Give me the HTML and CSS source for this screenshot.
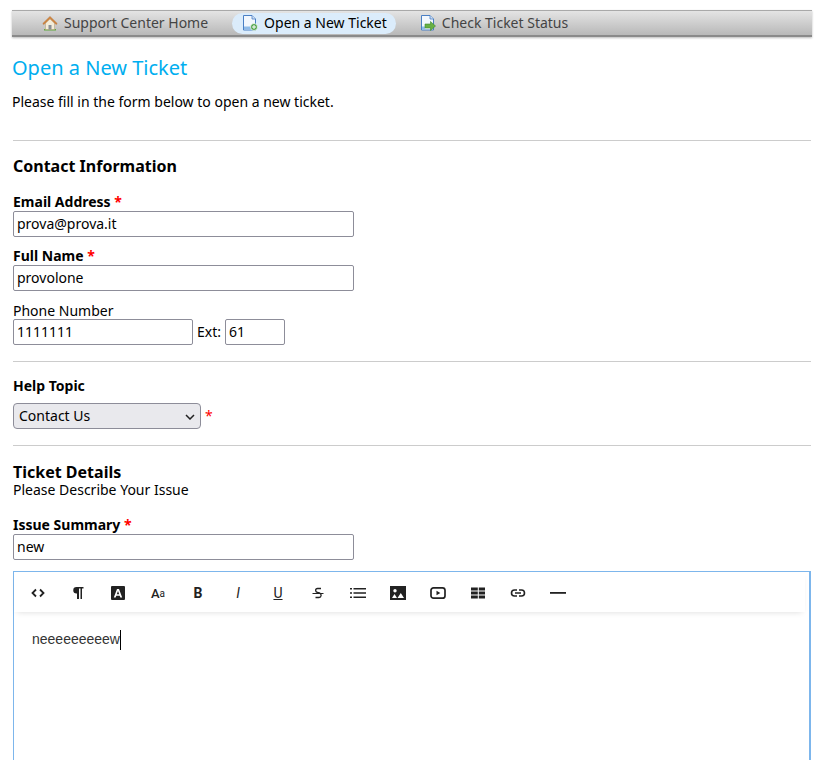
FILE: index.html
```html
<!doctype html>
<html>
<head>
<meta charset="UTF-8">
<title>Open a New Ticket</title>
<link rel="stylesheet" href="styles.css">
</head>
<body>
<div id="nav">
	<a class="nav_item" href="#">
		<svg class="nav_icon" viewBox="0 0 16 16">
			<path d="M2 14h12v1.500H2z" fill="#5fa83c"/>
			<path d="M3.500 8v6.500h9V8L8 3.500z" fill="#f3ecd9" stroke="#b9a582" stroke-width=".6"/>
			<path d="M6.500 10h3v4.500h-3z" fill="#8a8f95"/>
			<path d="M.8 8.600 8 1.500l7.200 7.100-1 .9L8 3.600 1.800 9.500z" fill="#d98a3d" stroke="#a8622a" stroke-width=".5"/>
		</svg>
		Support Center Home
	</a>
	<a class="nav_item active" href="#">
		<svg class="nav_icon" viewBox="0 0 16 16">
			<path d="M1.500.5h8.500l3.500 3.500v11h-12z" fill="#f2f7fd" stroke="#4a7fc4"/>
			<path d="M10 .5V4h3.500" fill="#cfe0f5" stroke="#4a7fc4" stroke-width=".8"/>
			<path d="M2 11.500h7v3H2z" fill="#8fbbe8"/>
			<circle cx="12" cy="12" r="3.500" fill="#4fa34a" stroke="#fff" stroke-width=".7"/>
			<path d="M10 11.500h1.500V10h1v1.500H14v1h-1.500V14h-1v-1.500H10z" fill="#fff"/>
		</svg>
		Open a New Ticket
	</a>
	<a class="nav_item" href="#">
		<svg class="nav_icon" viewBox="0 0 16 16">
			<path d="M1.500.5h8.500l3.500 3.500v11h-12z" fill="#f2f7fd" stroke="#4a7fc4"/>
			<path d="M10 .5V4h3.500" fill="#cfe0f5" stroke="#4a7fc4" stroke-width=".8"/>
			<path d="M2 11.500h3v3H2z" fill="#8fbbe8"/>
			<path d="M5 9h5.500V6.500L15.500 11l-5 4.500V13H5z" fill="#68b044" stroke="#3f8a2c" stroke-width=".6"/>
		</svg>
		Check Ticket Status
	</a>
</div>
<div id="content">
	<h1>Open a New Ticket</h1>
	<p class="intro">Please fill in the form below to open a new ticket.</p>
	<form id="ticketForm">
		<hr>
		<h3 class="contact_title">Contact Information</h3>
		<div class="field">
			<label class="strong">Email Address <span class="req">*</span></label>
			<input class="txt" value="prova@prova.it">
		</div>
		<div class="field">
			<label class="strong">Full Name <span class="req">*</span></label>
			<input class="txt" value="provolone">
		</div>
		<div class="field phone_field">
			<label>Phone Number</label>
			<div class="phone_row">
				<input class="txt phone" value="1111111">
				<span>Ext:</span>
				<input class="txt ext" value="61">
			</div>
		</div>
		<hr class="after_phone">
		<label class="strong topic_label">Help Topic</label>
		<div class="topic_row">
			<div class="select_wrap">
				<select class="topic"><option>Contact Us</option></select>
				<svg class="select_arrow" viewBox="0 0 10 6"><path d="M1 1l4 4 4-4" fill="none" stroke="#222" stroke-width="1.500"/></svg>
			</div>
			<span class="req thin">*</span>
		</div>
		<hr class="after_topic">
		<h3 class="details_title">Ticket Details</h3>
		<div class="details_sub">Please Describe Your Issue</div>
		<div class="field summary">
			<label class="strong">Issue Summary <span class="req">*</span></label>
			<input class="txt" value="new">
		</div>
		<div class="editor">
			<div class="toolbar">
				<button type="button" class="tool"><svg viewBox="0 0 16 16"><path d="M6 4.500 2.500 8 6 11.500M10 4.500 13.500 8 10 11.500" fill="none" stroke="#222" stroke-width="1.800"/></svg></button>
				<button type="button" class="tool"><svg viewBox="0 0 16 16"><path d="M6.500 2h7v1.500h-1.500V14h-1.500V3.500H9V14H7V8.500h-.5a3.250 3.250 0 0 1 0-6.500z" fill="#222"/></svg></button>
				<button type="button" class="tool"><svg viewBox="0 0 16 16"><path fill-rule="evenodd" d="M2 1h12a1 1 0 0 1 1 1v12a1 1 0 0 1-1 1H2a1 1 0 0 1-1-1V2a1 1 0 0 1 1-1zm5 3-3.200 8.500h1.900l.6-1.800h3.400l.6 1.800h1.900L9 4zm1 2 1.200 3.200H6.800z" fill="#222"/></svg></button>
				<button type="button" class="tool tool_txt"><span class="big_a">A</span><span class="small_a">a</span></button>
				<button type="button" class="tool tool_txt b">B</button>
				<button type="button" class="tool tool_txt i">I</button>
				<button type="button" class="tool tool_txt u">U</button>
				<button type="button" class="tool"><svg viewBox="0 0 16 16"><path d="M11 3.500H7.500C5 3.500 5 7 7.500 7.500l2 .5c2.500.7 2 4.500-.5 4.500H5.500" fill="none" stroke="#222" stroke-width="1.300"/><path d="M2.500 8.500h11" stroke="#222" stroke-width="1"/></svg></button>
				<button type="button" class="tool"><svg viewBox="0 0 16 16"><path d="M0 3h2v1.500H0zM0 7.200h2v1.500H0zM0 11.500h2V13H0zM3.500 3H16v1.500H3.500zM3.500 7.200H16v1.500H3.500zM3.500 11.500H16V13H3.500z" fill="#222"/></svg></button>
				<button type="button" class="tool"><svg viewBox="0 0 16 16"><path fill-rule="evenodd" d="M0 1h16v14H0zm5 3a1.700 1.700 0 1 0 0 3.400A1.700 1.700 0 0 0 5 4zm-3 9h5l-2.500-4zm5.500 0H14l-3.200-5z" fill="#222"/></svg></button>
				<button type="button" class="tool"><svg viewBox="0 0 16 16"><rect x="1" y="2.800" width="14" height="10.400" rx="2.500" fill="none" stroke="#222" stroke-width="1.700"/><path d="M6.500 5.800v4.400L10.300 8z" fill="#222"/></svg></button>
				<button type="button" class="tool"><svg viewBox="0 0 16 16"><path d="M1 2.500h6.800v3H1zM8.800 2.500H15v3H8.800zM1 6.500h6.800v3H1zM8.800 6.500H15v3H8.800zM1 10.500h6.800v3H1zM8.800 10.500H15v3H8.800z" fill="#222"/></svg></button>
				<button type="button" class="tool"><svg viewBox="0 0 16 16"><path d="M7 5H4.500a3 3 0 0 0 0 6H7M9 5h2.500a3 3 0 0 1 0 6H9M5 8h6" fill="none" stroke="#222" stroke-width="1.600"/></svg></button>
				<button type="button" class="tool"><svg viewBox="0 0 16 16"><path d="M0 7h16v1.800H0z" fill="#222"/></svg></button>
			</div>
			<div class="edit_area">neeeeeeeeew<span class="caret"></span></div>
		</div>
	</form>
</div>
</body>
</html>
```

FILE: styles.css
```css
html,body{overflow:hidden;height:760px}
body{
	margin:0;
	padding:10px 2px 0 12px;
	font-family:"Noto Sans","Open Sans",sans-serif;
	font-size:14px;
	line-height:20px;
	color:#000;
	background:#fff;
}
#nav{
	display:flex;
	align-items:center;
	height:24px;
	padding-left:20px;
	border-top:1px solid #a9a9a9;
	border-bottom:2px solid #8a8a8a;
	background:linear-gradient(#e4e4e4,#b8b8b8);
	box-shadow:0 1px 2px #bbb;
}
.nav_item{
	display:flex;
	align-items:center;
	height:21px;
	padding:0 10px;
	margin-right:14px;
	border-radius:11px;
	color:#444;
	text-decoration:none;
}
.nav_item.active{
	padding-right:9px;
	color:#000;
	background:#dbecfb;
}
.nav_icon{
	width:16px;
	height:16px;
	margin-right:6px;
}
#content{width:800px}
h1{
	margin:17px 0 0;
	font-size:20px;
	line-height:28px;
	font-weight:normal;
	color:#00aeef;
}
.intro{margin:10px 0 0}
#ticketForm{margin-left:1px}
hr{
	height:1px;
	margin:0;
	border:0;
	background:#ccc;
}
#ticketForm>hr:first-child{margin-top:28px;width:798px}
h3{
	margin:0;
	font-size:16px;
	line-height:22px;
	font-weight:bold;
}
.contact_title{margin-top:14px}
label{display:block}
.strong{font-weight:bold}
.req{color:#f00;font-weight:bold}
.req.thin{font-weight:normal}
.field{margin-top:8px}
.field label{padding-top:2px;line-height:18px}
.contact_title+.field{margin-top:14px}
.phone_field label{padding-top:4px;line-height:16px}
.txt{
	display:block;
	box-sizing:border-box;
	width:341px;
	height:26px;
	padding:0 3px 2px;
	border:1px solid #8d8d99;
	border-radius:2px;
	font:14px "Noto Sans","Open Sans",sans-serif;
	color:#000;
	background:#fff;
}
.phone_row{
	display:flex;
	align-items:center;
	gap:4px;
}
.phone{width:180px}
.ext{width:60px}
hr.after_phone{margin-top:16px;width:798px}
.topic_label{margin-top:14px}
.topic_row{
	display:flex;
	align-items:center;
	gap:4px;
	margin-top:7px;
}
.select_wrap{position:relative;height:26px}
.topic{
	appearance:none;
	display:block;
	box-sizing:border-box;
	width:188px;
	height:26px;
	padding:0 0 2px 5px;
	border:1px solid #8d8d99;
	border-radius:4px;
	font:14px "Noto Sans","Open Sans",sans-serif;
	color:#000;
	background:#e9e9ed;
}
.select_arrow{
	position:absolute;
	top:11px;
	right:6px;
	width:10px;
	height:6px;
}
hr.after_topic{margin-top:16px;width:798px}
h3.details_title{margin-top:18px;line-height:16px}
.field.summary{margin-top:14px}
.editor{
	box-sizing:border-box;
	width:798px;
	height:200px;
	margin-top:11px;
	border:1px solid #7db6ec;
	border-bottom:0;
	border-right:2px solid #7db6ec;
}
.toolbar{
	display:flex;
	height:40px;
	padding-left:4px;
	box-shadow:0 3px 6px -3px rgba(0,0,0,.15);
	margin-right:4px;
}
.tool{
	display:flex;
	align-items:center;
	justify-content:center;
	width:40px;
	height:42px;
	padding:0;
	border:0;
	background:none;
	color:#222;
}
.tool svg{width:16px;height:16px}
.tool_txt{font-family:Roboto,"Liberation Sans",sans-serif;font-size:14px}
.big_a{font-size:13px;font-weight:500}
.small_a{font-size:10px}
.b{font-weight:bold}
.i{font-style:italic}
.u{text-decoration:underline}
.edit_area{
	padding:17px 18px;
	font:14px/20px "Liberation Sans",Arial,sans-serif;
	color:#333;
}
.caret{
	display:inline-block;
	width:1px;
	height:20px;
	vertical-align:middle;
	background:#000;
}
```
